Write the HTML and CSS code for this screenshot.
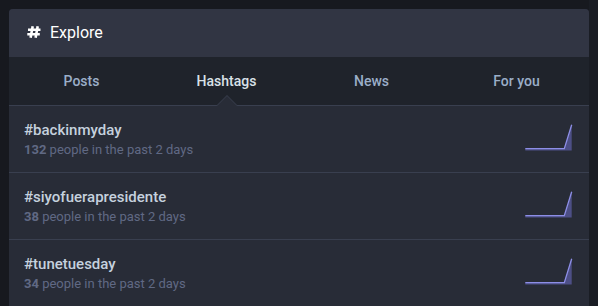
FILE: index.html
```html
<!DOCTYPE html>
<html lang="en">
<head>
<meta charset="utf-8">
<title>Explore</title>
<link rel="stylesheet" href="styles.css">
</head>
<body>
<div class="page">
  <section class="column">
    <header class="col-header">
      <svg class="hash-icon" viewBox="0 0 14 12" aria-hidden="true">
        <path d="M5.7 0.3 L3.6 11.7 M10.7 0.3 L8.6 11.7 M1 3.7 H13.5 M0.3 8.3 H12.8" />
      </svg>
      <span class="col-title">Explore</span>
    </header>
    <nav class="tabs">
      <a class="tab">Posts</a>
      <a class="tab active">Hashtags</a>
      <a class="tab">News</a>
      <a class="tab">For you</a>
    </nav>
    <div class="trends">
      <div class="trend">
        <div class="trend-info">
          <div class="trend-name">#backinmyday</div>
          <div class="trend-uses"><strong>132</strong> people in the past 2 days</div>
        </div>
        <svg class="spark" viewBox="0 0 50 28" aria-hidden="true">
          <path class="spark-fill" d="M1.3 25.7 L40.3 25.7 L47.7 1.7 L47.7 27.4 L1.3 27.4 Z"/>
          <path class="spark-line" d="M1.3 25.7 L40.3 25.7 L47.7 1.7"/>
        </svg>
      </div>
      <div class="trend">
        <div class="trend-info">
          <div class="trend-name">#siyofuerapresidente</div>
          <div class="trend-uses"><strong>38</strong> people in the past 2 days</div>
        </div>
        <svg class="spark" viewBox="0 0 50 28" aria-hidden="true">
          <path class="spark-fill" d="M1.3 25.7 L40.3 25.7 L47.7 1.7 L47.7 27.4 L1.3 27.4 Z"/>
          <path class="spark-line" d="M1.3 25.7 L40.3 25.7 L47.7 1.7"/>
        </svg>
      </div>
      <div class="trend">
        <div class="trend-info">
          <div class="trend-name">#tunetuesday</div>
          <div class="trend-uses"><strong>34</strong> people in the past 2 days</div>
        </div>
        <svg class="spark" viewBox="0 0 50 28" aria-hidden="true">
          <path class="spark-fill" d="M1.3 25.7 L40.3 25.7 L47.7 1.7 L47.7 27.4 L1.3 27.4 Z"/>
          <path class="spark-line" d="M1.3 25.7 L40.3 25.7 L47.7 1.7"/>
        </svg>
      </div>
    </div>
  </section>
  <div class="side-strip"></div>
</div>
</body>
</html>
```

FILE: styles.css
```css
html, body {
  margin: 0;
  padding: 0;
  height: 100%;
}

body {
  background: #17191f;
  font-family: Roboto, "Noto Sans", sans-serif;
  overflow: hidden;
}

.page {
  display: flex;
  height: 306px;
  padding: 9px 0 0 9px;
  box-sizing: border-box;
}

.column {
  width: 580px;
  flex: none;
  background: #282c37;
  border-radius: 4px 4px 0 0;
  overflow: hidden;
  display: flex;
  flex-direction: column;
}

.side-strip {
  flex: 1;
  margin-top: -9px;
  background: #1a1d24;
}

.col-header {
  height: 48px;
  background: #313543;
  display: flex;
  align-items: center;
  padding-left: 18px;
  color: #ffffff;
}

.hash-icon {
  width: 14px;
  height: 12px;
  margin-right: 9px;
  margin-top: -2px;
  fill: none;
  stroke: #ffffff;
  stroke-width: 2.6;
  stroke-linecap: butt;
}

.col-title {
  font-size: 16px;
  line-height: 48px;
}

.tabs {
  display: flex;
  height: 48px;
  background: #1f232b;
  border-bottom: 1px solid #393f4f;
}

.tab {
  flex: 1;
  position: relative;
  text-align: center;
  font-size: 14px;
  font-weight: 500;
  line-height: 48px;
  color: #9baec8;
}

.tab.active {
  color: #d9e1e8;
}

.tab.active::before,
.tab.active::after {
  content: "";
  position: absolute;
  left: 50%;
  width: 0;
  height: 0;
  border-style: solid;
  border-color: transparent;
}

.tab.active::before {
  bottom: -1px;
  margin-left: -11px;
  border-width: 0 11px 11px;
  border-bottom-color: #393f4f;
}

.tab.active::after {
  bottom: -1px;
  margin-left: -10px;
  border-width: 0 10px 10px;
  border-bottom-color: #282c37;
}

.trends {
  display: flex;
  flex-direction: column;
}

.trend {
  display: flex;
  align-items: center;
  height: 66px;
  padding: 0 15px;
  border-bottom: 1px solid #393f4f;
}

.trend-info {
  flex: 1;
  min-width: 0;
  margin-top: 1px;
}

.trend-name {
  font-size: 15px;
  font-weight: 500;
  line-height: 20px;
  color: #c5d1de;
}

.trend-uses {
  font-size: 13px;
  line-height: 19px;
  color: #606984;
}

.trend-uses strong {
  font-weight: 700;
}

.spark {
  width: 50px;
  height: 28px;
  flex: none;
  margin-bottom: 4px;
}

.spark-fill {
  fill: #4d4f86;
}

.spark-line {
  fill: none;
  stroke: #8d8ee6;
  stroke-width: 1.3;
}
```
